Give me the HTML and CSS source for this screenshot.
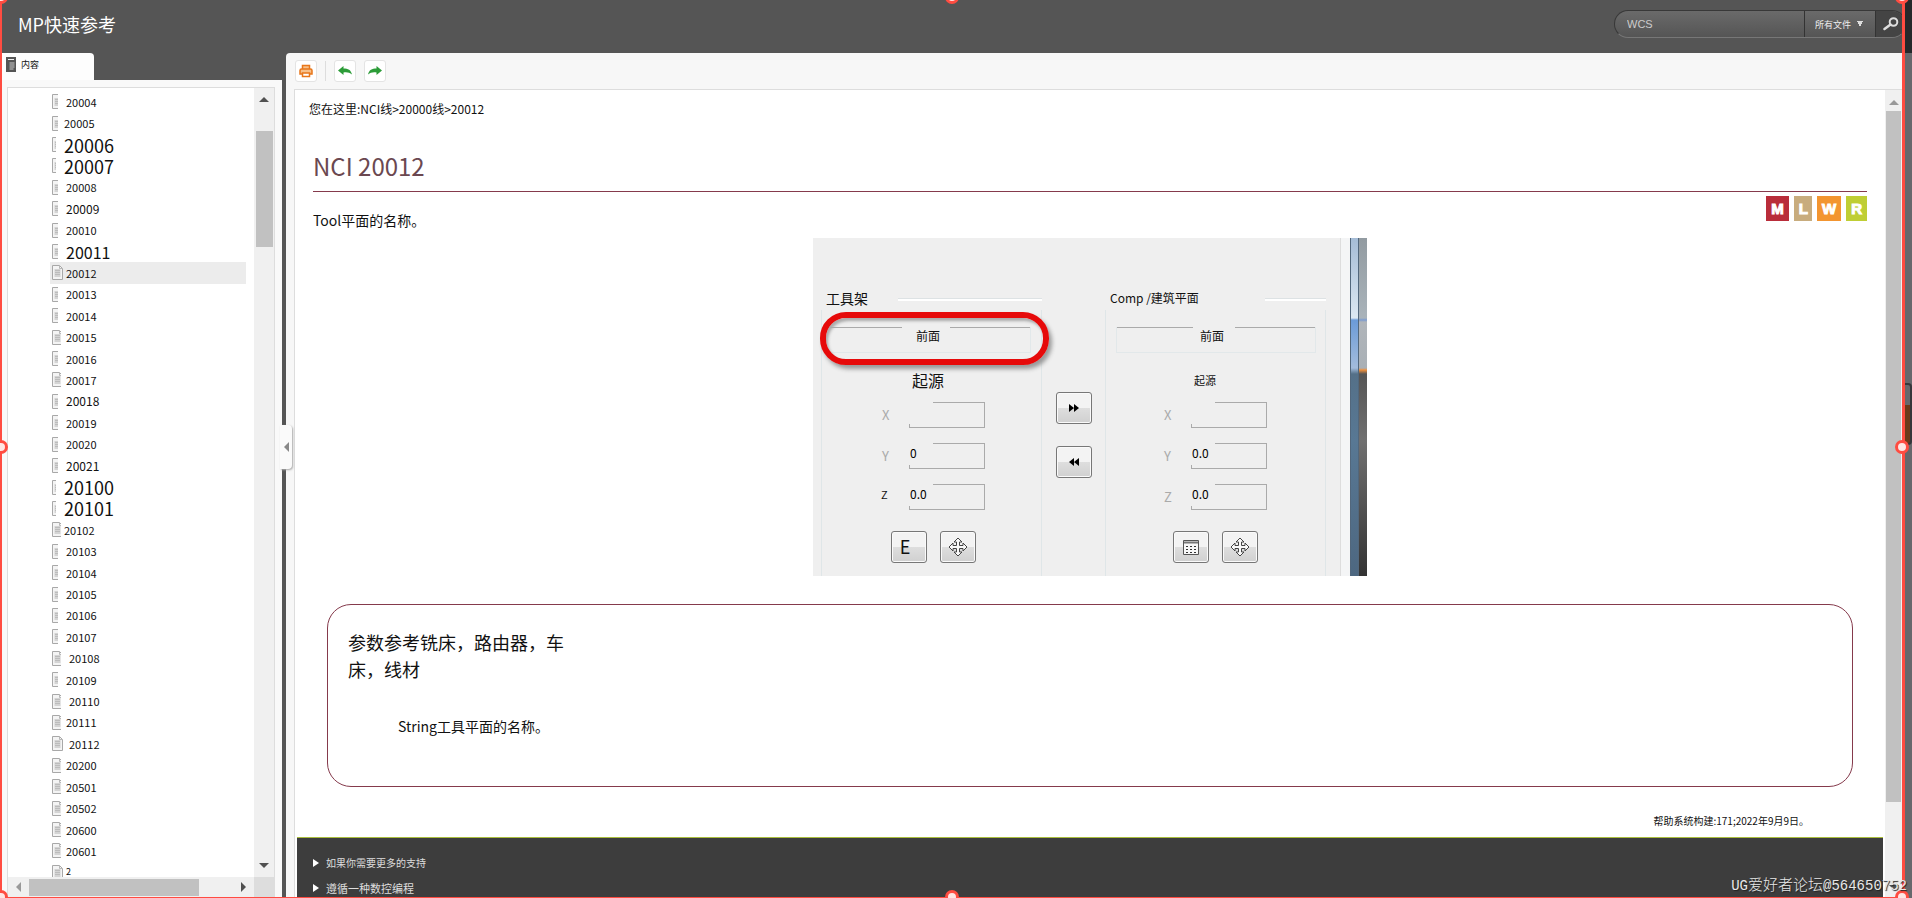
FILE: index.html
```html
<!DOCTYPE html>
<html lang="zh-CN">
<head>
    <meta charset="UTF-8">
    <meta name="viewport" content="width=device-width, initial-scale=1.0">
    <title>MP快速参考</title>
    <link rel="stylesheet" href="styles.css">
</head>
<body>

    <svg class="sprite" aria-hidden="true">
        <symbol id="doc" viewBox="0 0 11 15" preserveAspectRatio="xMinYMin slice">
            <path d="M.5 .5h7l3 3v11h-10z" fill="#f4f4f4" stroke="#a8a8a8"/>
            <path d="M7.500 .5v3h3" fill="none" stroke="#b8b8b8"/>
            <path d="M2.500 4h6v8h-6z" fill="#d4d4d4"/>
            <path d="M3 5.500h5M3 7.500h5M3 9.500h5" stroke="#bcbcbc"/>
        </symbol>
        <symbol id="move" viewBox="0 0 20 20">
            <path d="M10 1l4 4h-2.500v3.500h3.500v-2.500l4 4-4 4v-2.500h-3.500v3.500h2.500l-4 4-4-4h2.500v-3.500h-3.500v2.500l-4-4 4-4v2.500h3.500v-3.500h-2.500z" fill="#fafafa" stroke="#444"/>
        </symbol>
        <symbol id="arrow" viewBox="0 0 14 10">
            <path d="M14 4.500L8.500 0v2.500C4 2.500 1 4 0 8.500 2.500 6.500 5 6 8.500 6.500V9z" fill="#2c9c38"/>
        </symbol>
    </svg>

    <div class="app">
        <header class="topbar">
            <h1>MP快速参考</h1>
            <form class="search">
                <input type="text" value="WCS" aria-label="搜索">
                <select aria-label="范围">
                    <option>所有文件</option>
                </select>
                <button type="button" aria-label="搜索">
                    <svg width="16" height="14" viewBox="0 0 16 14"><circle cx="10.500" cy="5" r="3.800" fill="none" stroke="#ddd" stroke-width="2"/><path d="M7.500 7.500L1.500 12" stroke="#ddd" stroke-width="2.500" stroke-linecap="round"/></svg>
                </button>
            </form>
        </header>

        <div class="main">
            <nav class="sidebar">
                <button class="tab" type="button">
                    <svg width="11" height="15" viewBox="0 0 11 15"><path d="M0 0h10v15H0z" fill="#555"/><path d="M2 2.500h6" stroke="#eee"/><path d="M3.500 6h5M3.500 8h5M3.500 10h5M3.500 12h4" stroke="#ccc"/></svg>
                    内容
                </button>
                <div class="side-panel">
                    <div class="tree-box">
                        <ul class="tree">
                            <li class="narrow"><svg><use href="#doc"/></svg><a href="#">20004</a></li>
                            <li class="narrow near"><svg><use href="#doc"/></svg><a href="#">20005</a></li>
                            <li class="thin large"><svg><use href="#doc"/></svg><a href="#">20006</a></li>
                            <li class="thin large"><svg><use href="#doc"/></svg><a href="#">20007</a></li>
                            <li class="narrow"><svg><use href="#doc"/></svg><a href="#">20008</a></li>
                            <li class="narrow mid"><svg><use href="#doc"/></svg><a href="#">20009</a></li>
                            <li class="narrow"><svg><use href="#doc"/></svg><a href="#">20010</a></li>
                            <li class="narrow big"><svg><use href="#doc"/></svg><a href="#">20011</a></li>
                            <li class="full current"><svg><use href="#doc"/></svg><a href="#">20012</a></li>
                            <li class="narrow"><svg><use href="#doc"/></svg><a href="#">20013</a></li>
                            <li class="narrow"><svg><use href="#doc"/></svg><a href="#">20014</a></li>
                            <li><svg><use href="#doc"/></svg><a href="#">20015</a></li>
                            <li class="narrow"><svg><use href="#doc"/></svg><a href="#">20016</a></li>
                            <li><svg><use href="#doc"/></svg><a href="#">20017</a></li>
                            <li class="narrow mid"><svg><use href="#doc"/></svg><a href="#">20018</a></li>
                            <li class="narrow"><svg><use href="#doc"/></svg><a href="#">20019</a></li>
                            <li class="narrow"><svg><use href="#doc"/></svg><a href="#">20020</a></li>
                            <li class="narrow mid"><svg><use href="#doc"/></svg><a href="#">20021</a></li>
                            <li class="thin large"><svg><use href="#doc"/></svg><a href="#">20100</a></li>
                            <li class="thin large"><svg><use href="#doc"/></svg><a href="#">20101</a></li>
                            <li class="near"><svg><use href="#doc"/></svg><a href="#">20102</a></li>
                            <li class="narrow"><svg><use href="#doc"/></svg><a href="#">20103</a></li>
                            <li class="narrow"><svg><use href="#doc"/></svg><a href="#">20104</a></li>
                            <li class="narrow"><svg><use href="#doc"/></svg><a href="#">20105</a></li>
                            <li class="narrow"><svg><use href="#doc"/></svg><a href="#">20106</a></li>
                            <li class="narrow"><svg><use href="#doc"/></svg><a href="#">20107</a></li>
                            <li class="far"><svg><use href="#doc"/></svg><a href="#">20108</a></li>
                            <li class="narrow"><svg><use href="#doc"/></svg><a href="#">20109</a></li>
                            <li class="far"><svg><use href="#doc"/></svg><a href="#">20110</a></li>
                            <li><svg><use href="#doc"/></svg><a href="#">20111</a></li>
                            <li class="full far"><svg><use href="#doc"/></svg><a href="#">20112</a></li>
                            <li><svg><use href="#doc"/></svg><a href="#">20200</a></li>
                            <li><svg><use href="#doc"/></svg><a href="#">20501</a></li>
                            <li><svg><use href="#doc"/></svg><a href="#">20502</a></li>
                            <li><svg><use href="#doc"/></svg><a href="#">20600</a></li>
                            <li><svg><use href="#doc"/></svg><a href="#">20601</a></li>
                            <li class="full small"><svg><use href="#doc"/></svg><a href="#">2</a></li>
                        </ul>
                        <div class="vscroll">
                            <i class="tri up"></i>
                            <div class="thumb"></div>
                            <i class="tri down"></i>
                        </div>
                        <div class="hscroll">
                            <i class="tri left"></i>
                            <div class="thumb"></div>
                            <i class="tri right"></i>
                        </div>
                        <div class="corner"></div>
                    </div>
                </div>
            </nav>

            <div class="splitter">
                <button type="button" aria-label="收起"><i class="tri left"></i></button>
            </div>

            <section class="content">
                <div class="toolbar">
                    <button type="button" aria-label="打印">
                        <svg width="14" height="14" viewBox="0 0 14 14"><path d="M3.500 5V1.500h7V5M2.500 5h9q1.500 0 1.500 1.500V10H1V6.500q0-1.500 1.500-1.500z" fill="#f7c08a" stroke="#e8761a" stroke-width="1.500"/><path d="M3.500 9h7v3.500h-7z" fill="#fff" stroke="#e8761a" stroke-width="1.500"/></svg>
                    </button>
                    <span class="sep"></span>
                    <button type="button" aria-label="后退">
                        <svg class="flip" width="14" height="10"><use href="#arrow"/></svg>
                    </button>
                    <button type="button" aria-label="前进">
                        <svg width="14" height="10"><use href="#arrow"/></svg>
                    </button>
                </div>

                <div class="viewer">
                    <div class="page">
                        <div class="article">
                            <p class="crumbs">您在这里:NCI线&gt;20000线&gt;20012</p>
                            <h2>NCI 20012</h2>
                            <div class="intro">
                                <p>Tool平面的名称。</p>
                                <div class="badges">
                                    <span class="m">M</span>
                                    <span class="l">L</span>
                                    <span class="w">W</span>
                                    <span class="r">R</span>
                                </div>
                            </div>

                            <div class="dialog">
                                <div class="planes tool">
                                    <div class="plane-title"><span>工具架</span></div>
                                    <div class="plane-body">
                                        <button class="front" type="button">前面</button>
                                        <div class="ring"></div>
                                        <div class="origin">起源</div>
                                        <div class="axis"><label for="tx">X</label><input id="tx" type="text"></div>
                                        <div class="axis"><label for="ty">Y</label><input id="ty" type="text" value="0"></div>
                                        <div class="axis on"><label for="tz">Z</label><input id="tz" type="text" value="0.0"></div>
                                        <div class="actions">
                                            <button class="key" type="button">E</button>
                                            <button class="key" type="button" aria-label="移动"><svg width="20" height="20"><use href="#move"/></svg></button>
                                        </div>
                                    </div>
                                </div>
                                <div class="transfer">
                                    <button class="key" type="button" aria-label="向右复制"><svg width="10" height="8"><path d="M0 0l5 4-5 4zM5 0l5 4-5 4z"/></svg></button>
                                    <button class="key" type="button" aria-label="向左复制"><svg width="10" height="8"><path d="M5 0L0 4l5 4zM10 0L5 4l5 4z"/></svg></button>
                                </div>
                                <div class="planes comp">
                                    <div class="plane-title"><span>Comp /建筑平面</span></div>
                                    <div class="plane-body">
                                        <button class="front" type="button">前面</button>
                                        <div class="origin">起源</div>
                                        <div class="axis"><label for="cx">X</label><input id="cx" type="text"></div>
                                        <div class="axis"><label for="cy">Y</label><input id="cy" type="text" value="0.0"></div>
                                        <div class="axis"><label for="cz">Z</label><input id="cz" type="text" value="0.0"></div>
                                        <div class="actions">
                                            <button class="key" type="button" aria-label="列表"><svg width="16" height="15" viewBox="0 0 16 15"><path d="M.5 .5h15v14H.5z" fill="#f8f8f8" stroke="#555"/><path d="M1 2.500h14" stroke="#777" stroke-width="2"/><path d="M3 6.500h10M3 9.500h10M3 12.500h10" stroke="#333" stroke-dasharray="2 2"/></svg></button>
                                            <button class="key" type="button" aria-label="移动"><svg width="20" height="20"><use href="#move"/></svg></button>
                                        </div>
                                    </div>
                                </div>
                                <div class="dialog-edge"></div>
                                <div class="desk-light"></div>
                                <div class="desk-dark"></div>
                            </div>

                            <div class="params">
                                <h3>参数参考铣床，路由器，车床，线材</h3>
                                <p>String工具平面的名称。</p>
                            </div>
                            <p class="build">帮助系统构建:171;2022年9月9日。</p>
                        </div>
                        <footer class="more">
                            <a href="#"><i class="tri right"></i>如果你需要更多的支持</a>
                            <a class="follow" href="#"><i class="tri right"></i>遵循一种数控编程</a>
                        </footer>
                    </div>
                    <div class="vscroll">
                        <i class="tri up"></i>
                        <div class="thumb"></div>
                        <i class="tri down"></i>
                    </div>
                </div>
            </section>
        </div>
    </div>

    <!-- desktop behind the window -->
    <div class="desktop"><div class="gadget"></div></div>

    <!-- capture frame -->
    <div class="frame">
        <i class="grip tl"></i><i class="grip tc"></i><i class="grip tr"></i>
        <i class="grip ml"></i><i class="grip mr"></i>
        <i class="grip bl"></i><i class="grip bc"></i><i class="grip br"></i>
    </div>

    <div class="watermark">UG<span>爱好者论坛</span>@564650752</div>

</body>
</html>
```
FILE: styles.css
```css
* {
    box-sizing: border-box;
}
body {
    margin: 0;
    height: 100vh;
    display: flex;
    overflow: hidden;
    position: relative;
    background: #555;
    color: #111;
    font-family: "Noto Sans CJK SC", sans-serif;
    font-size: 12px;
}
h1, h2, h3, p, ul {
    margin: 0;
    padding: 0;
    font-weight: normal;
}
button, input, select {
    font-family: inherit;
    margin: 0;
    padding: 0;
}
button {
    display: flex;
    align-items: center;
    justify-content: center;
    color: #111;
}
a {
    color: inherit;
    text-decoration: none;
}
.sprite {
    display: none;
}
.app {
    flex: 1;
    min-width: 0;
    padding-left: 2px;
    display: flex;
    flex-direction: column;
    overflow: hidden;
}

/* triangles */
.tri {
    width: 0;
    height: 0;
    flex: none;
    border: 5px solid transparent;
}
.tri.up {
    border-top: 0;
    border-bottom-color: #505050;
}
.tri.down {
    border-bottom: 0;
    border-top-color: #505050;
}
.tri.left {
    border-left: 0;
    border-right-color: #999;
}
.tri.right {
    border-right: 0;
    border-left-color: #505050;
}

/* top bar */
.topbar {
    height: 53px;
    flex: none;
    display: flex;
    justify-content: space-between;
    align-items: flex-start;
    background: #555;
    padding: 10px 0 0 16px;
}
.topbar h1 {
    font-size: 18px;
    line-height: 28px;
    color: #fff;
}
.search {
    display: flex;
    height: 28px;
    width: 292px;
    margin-right: -4px;
    border: 1px solid #383838;
    border-bottom-color: #777;
    border-radius: 14px;
    overflow: hidden;
    background: linear-gradient(#6a6a6a, #555);
}
.search input {
    flex: 1;
    min-width: 0;
    border: 0;
    background: none;
    color: #ccc;
    padding-left: 12px;
    font-family: "Liberation Sans", sans-serif;
    font-size: 11px;
}
.search select {
    width: 71px;
    appearance: none;
    border: 0;
    border-left: 1px solid #333;
    border-radius: 0;
    padding-left: 10px;
    color: #eee;
    font-size: 9px;
    background: conic-gradient(from -27deg at 50% 100%, #ddd 54deg, transparent 0) 52px 10px / 6px 6px no-repeat;
}
.search button {
    width: 30px;
    border: 0;
    border-left: 1px solid #333;
    background: #444;
}

/* sidebar */
.main {
    flex: 1;
    min-height: 0;
    display: flex;
}
.sidebar {
    width: 280px;
    flex: none;
    display: flex;
    flex-direction: column;
    align-items: flex-start;
}
.tab {
    width: 92px;
    height: 27px;
    justify-content: flex-start;
    gap: 4px;
    padding: 0 0 4px 4px;
    border: 0;
    border-radius: 0 4px 0 0;
    background: #fdfdfd;
    font-size: 9px;
}
.side-panel {
    flex: 1;
    min-height: 0;
    align-self: stretch;
    padding: 7px 7px 1px 5px;
    background: #f9f9f9;
    display: flex;
}
.tree-box {
    flex: 1;
    min-height: 0;
    display: grid;
    grid-template-columns: 1fr 20px;
    grid-template-rows: minmax(0, 1fr) 20px;
    border: 1px solid #ddd;
    border-bottom: 0;
    background: #fff;
    overflow: hidden;
}
.tree {
    list-style: none;
    display: flex;
    flex-direction: column;
    padding: 3px 8px 0 42px;
    margin-bottom: -6px;
}
.tree li {
    flex: 1;
    min-height: 0;
    display: flex;
    align-items: center;
    padding-left: 2px;
    font-size: 11px;
    line-height: 18px;
}
.tree svg {
    flex: none;
    width: 9px;
    height: 15px;
    margin-right: 5px;
}
.tree .narrow svg {
    width: 6px;
    margin-right: 8px;
}
.tree .thin svg {
    width: 4px;
    margin-right: 8px;
}
.tree .full svg {
    width: 11px;
    margin-right: 3px;
}
.tree .near a {
    margin-left: -2px;
}
.tree .far a {
    margin-left: 3px;
}
.tree .mid {
    font-size: 12px;
}
.tree .big {
    font-size: 16px;
}
.tree .large {
    font-size: 18px;
}
.tree .small {
    font-size: 9px;
}
.tree .current {
    background: #ececec;
}
.vscroll {
    display: flex;
    flex-direction: column;
    align-items: center;
    padding: 9px 0;
    background: #f0f0f0;
}
.vscroll .thumb {
    width: 17px;
    height: 116px;
    margin: 29px 0 auto;
    background: #c1c1c1;
}
.hscroll {
    position: relative;
    z-index: 1;
    display: flex;
    align-items: center;
    padding: 0 8px;
    background: #f0f0f0;
}
.hscroll .thumb {
    width: 170px;
    height: 17px;
    margin: 0 auto 0 8px;
    background: #c1c1c1;
}
.corner {
    background: #ddd;
}

/* bar between the panes */
.splitter {
    width: 4px;
    flex: none;
    position: relative;
    background: #555;
}
.splitter button {
    position: absolute;
    left: -2px;
    top: 372px;
    width: 12px;
    height: 44px;
    border: 0;
    border-radius: 0 4px 4px 0;
    background: #fafafa;
    box-shadow: 1px 1px 2px #aaa;
}
.splitter .tri {
    border-right-color: #888;
}

/* content pane */
.content {
    flex: 1;
    min-width: 0;
    display: flex;
    flex-direction: column;
    background: #f7f7f7;
    border-top-left-radius: 4px;
}
.toolbar {
    height: 36px;
    flex: none;
    display: flex;
    align-items: center;
    gap: 8px;
    padding: 0 9px;
}
.toolbar button {
    width: 22px;
    height: 22px;
    border: 1px solid #e4e4e4;
    border-radius: 3px;
    background: #fff;
}
.toolbar .sep {
    width: 1px;
    height: 20px;
    background: #ddd;
}
.toolbar .flip {
    transform: scaleX(-1);
}
.viewer {
    flex: 1;
    min-height: 0;
    margin-left: 8px;
    display: flex;
    border: 1px solid #ddd;
    border-width: 1px 0 0 1px;
    background: #fff;
}
.page {
    flex: 1;
    min-width: 0;
    padding: 0 2px;
    display: flex;
    flex-direction: column;
    overflow: hidden;
}
.viewer .vscroll {
    width: 17px;
    padding: 10px 0 8px;
}
.viewer .vscroll .up {
    border-bottom-color: #999;
}
.viewer .thumb {
    width: 15px;
    height: 691px;
    margin-top: 6px;
}
.article {
    padding: 0 16px;
}
.crumbs {
    margin: 8px -4px 0;
    line-height: 22px;
}
h2 {
    margin-top: 28px;
    padding-bottom: 7px;
    border-bottom: 1px solid #853a4c;
    font-size: 24px;
    line-height: 36px;
    color: #6b4850;
}
.intro {
    display: flex;
    justify-content: space-between;
    height: 46px;
    padding-top: 4px;
    font-size: 14px;
}
.intro p {
    padding-top: 13px;
    line-height: 22px;
}
.badges {
    display: flex;
    align-items: flex-start;
    gap: 5px;
}
.badges span {
    padding: 0 5px;
    font: 900 15px/25px "Liberation Sans", sans-serif;
    color: #fff;
    -webkit-text-stroke: 1px #fff;
}
.badges .l {
    padding: 0 4px 0 5px;
}
.badges .m { background: #b92d3a; }
.badges .l { background: #c8ac7d; }
.badges .w { background: #f39530; }
.badges .r { background: #bfce34; }

/* plane dialog */
.dialog {
    width: 554px;
    height: 338px;
    margin: 0 auto;
    padding-left: 8px;
    display: flex;
    background: #efefef;
}
.planes {
    width: 221px;
    padding-top: 50px;
    display: flex;
    flex-direction: column;
}
.plane-title {
    display: flex;
    align-items: center;
    height: 22px;
    padding-left: 5px;
    font-size: 12px;
    line-height: 20px;
}
.plane-title span {
    padding-bottom: 2px;
}
.plane-title::after {
    content: "";
    flex: 1;
    height: 2px;
    margin-left: 66px;
    border-top: 1px solid #dde2e4;
    background: #fff;
}
.tool .plane-title {
    font-size: 14px;
}
.tool .plane-title::after {
    margin-left: 30px;
}
.plane-body {
    flex: 1;
    position: relative;
    padding: 17px 10px 0 57px;
    border: 1px solid #dfe6e8;
    border-width: 0 1px;
}
.tool .plane-body {
    padding-left: 59px;
}
/* borders of the old controls are broken around their text */
.front {
    width: 200px;
    height: 26px;
    margin-left: -47px;
    padding: 0 8px 8px 0;
    font-size: 12px;
    border: 1px solid #e2e8ea;
    border-top: 0;
    background:
        linear-gradient(#aaa, #aaa) 0 0 / 76px 1px no-repeat,
        linear-gradient(#aaa, #aaa) 100% 0 / 80px 1px no-repeat;
}
.tool .front {
    width: 206px;
    margin-left: -56px;
    padding-right: 0;
}
.ring {
    position: absolute;
    left: -2px;
    top: 2px;
    width: 229px;
    height: 53px;
    border: 6px solid #e60a0a;
    border-radius: 26px;
    box-shadow: 3px 4px 4px #999, inset 2px 3px 3px #aaa;
}
.origin {
    margin: 16px 0 11px 31px;
    font-size: 11px;
    line-height: 22px;
}
.tool .origin {
    font-size: 16px;
}
.axis {
    display: flex;
    margin-bottom: 15px;
    color: #aaa;
}
.axis.on {
    color: #111;
}
.axis label {
    width: 28px;
    padding-left: 1px;
    font-size: 13px;
    line-height: 26px;
}
.axis.on label {
    padding-left: 0;
    font-size: 11px;
    line-height: 20px;
}
.axis input {
    width: 76px;
    height: 26px;
    border: 0;
    padding: 0 0 8px 1px;
    font-size: 12px;
    background:
        linear-gradient(#aaa, #aaa) 100% 0 / 52px 1px no-repeat,
        linear-gradient(#aaa, #aaa) 100% 0 / 1px 100% no-repeat,
        linear-gradient(#aaa, #aaa) 0 100% / 100% 1px no-repeat,
        linear-gradient(#aaa, #aaa) 0 100% / 1px 4px no-repeat;
}
.actions {
    display: flex;
    gap: 13px;
    margin: 21px 0 0 10px;
}
.key {
    width: 36px;
    height: 32px;
    border: 1px solid #777;
    border-radius: 3px;
    background: linear-gradient(#f3f3f3 50%, #dedede 50%, #d0d0d0);
    box-shadow: inset 0 0 0 1px #fafafa;
    font-size: 18px;
}
.tool .key:first-child {
    padding: 0 8px 2px 0;
}
.transfer {
    width: 63px;
    padding-top: 154px;
    display: flex;
    flex-direction: column;
    align-items: center;
    gap: 22px;
}
.dialog-edge {
    flex: 1;
    margin-left: 14px;
    border-left: 1px solid #ddd;
    background: #f4f5f6;
}
.desk-light {
    width: 9px;
    border: 1px solid #52677c;
    border-width: 0 1px;
    background: linear-gradient(#a5bcd6, #dce8f2 80px, #6b9bd8 82px, #a3bcdc 130px, #547088 136px, #587894 60%, #4d6780);
}
.desk-dark {
    width: 8px;
    background: linear-gradient(#929ba1, #a9b3ba 80px, #7b9bd0 82px, #b0b5ba 84px, #a9b0b6 130px, #f0903c 132px, #555 136px, #707070 60%, #333);
}

/* parameter box */
.params {
    margin: 28px 14px 0;
    height: 183px;
    padding: 24px 20px 0;
    border: 1px solid #853a4c;
    border-radius: 24px;
}
.params h3 {
    max-width: 220px;
    font-size: 18px;
    line-height: 27px;
}
.params p {
    margin: 32px 0 0 50px;
    font-size: 14px;
    line-height: 22px;
}
.build {
    margin-top: 24px;
    padding-right: 58px;
    text-align: right;
    font-size: 10px;
    line-height: 20px;
}
.more {
    flex: 1;
    margin-top: 6px;
    padding: 15px 16px 0;
    display: flex;
    flex-direction: column;
    gap: 5px;
    border-top: 1px solid #a9bd3c;
    background: #3d3d3d;
    color: #ddd;
    font-size: 10px;
    line-height: 20px;
}
.more a {
    display: flex;
    align-items: center;
    gap: 7px;
}
.more .follow {
    font-size: 11px;
}
.more .tri {
    border-width: 4px 0 4px 6px;
    border-left-color: #fff;
}

/* right edge and capture frame */
.desktop {
    width: 10px;
    flex: none;
    padding-top: 383px;
    background: linear-gradient(#25282a 53px, #67686c 53px);
}
.gadget {
    height: 62px;
    border: 2px solid #36373b;
    border-left: 0;
    border-radius: 0 4px 4px 0;
    background: linear-gradient(#67686c 20px, #6b3a1a 20px);
}
.frame {
    position: absolute;
    inset: -4px 7px 0 -1px;
    border: 3px solid #ff4c41;
    border-top-width: 1px;
    border-bottom-width: 1px;
    pointer-events: none;
}
.grip {
    position: absolute;
    width: 14px;
    height: 14px;
    margin: -7px;
    border: 3px solid #ff4c41;
    border-radius: 50%;
    background: #ffe6e4;
}
.tl, .tc, .tr { top: 0; }
.ml, .mr { top: 50%; }
.bl, .bc, .br { top: 100%; }
.tl, .ml, .bl { left: -1px; }
.tc, .bc { left: 50%; }
.tr, .mr, .br { left: 100%; }
.watermark {
    position: absolute;
    right: 5px;
    bottom: 1px;
    font-family: "Liberation Mono", "Noto Sans CJK SC", monospace;
    font-size: 14px;
    font-weight: 300;
    line-height: 20px;
    color: #e8e8e8;
    text-shadow: 1px 1px 1px #222;
}
.watermark span {
    font-size: 15px;
}
```
